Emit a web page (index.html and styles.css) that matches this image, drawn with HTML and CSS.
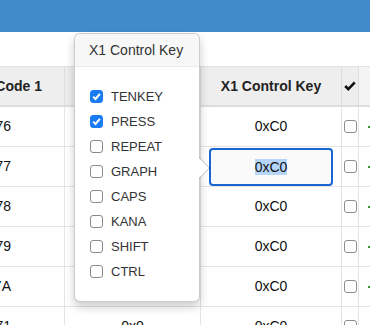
FILE: index.html
```html
<!DOCTYPE html>
<html>
<head>
<meta charset="utf-8">
<link rel="stylesheet" href="styles.css">
</head>
<body>
<div class="topbar"></div>
<div class="toolbar"></div>
<div class="grid-wrap">
  <table class="grid">
    <colgroup><col class="c1"><col class="c2"><col class="c3"><col class="c4"><col class="c5"></colgroup>
    <thead>
      <tr>
        <th class="code">Key Code 1</th>
        <th>Key Code 2</th>
        <th>X1 Control Key</th>
        <th class="chk"><svg class="hcheck" width="12" height="10" viewBox="0 0 12 10"><path d="M1.2 5 L4.3 8.1 L10.8 1.4" fill="none" stroke="#111" stroke-width="2.6"/></svg></th>
        <th class="extra"></th>
      </tr>
    </thead>
    <tbody>
      <tr><td class="code">0x76</td><td>0x0</td><td>0xC0</td><td class="chk"><span class="tbox"></span></td><td class="extra"><span class="mark"></span></td></tr>
      <tr><td class="code">0x77</td><td>0x0</td><td class="edit"><div class="editor"><span class="sel">0xC0</span></div></td><td class="chk"><span class="tbox"></span></td><td class="extra"><span class="mark"></span></td></tr>
      <tr><td class="code">0x78</td><td>0x0</td><td>0xC0</td><td class="chk"><span class="tbox"></span></td><td class="extra"><span class="mark"></span></td></tr>
      <tr><td class="code">0x79</td><td>0x0</td><td>0xC0</td><td class="chk"><span class="tbox"></span></td><td class="extra"><span class="mark"></span></td></tr>
      <tr><td class="code">0x7A</td><td>0x0</td><td>0xC0</td><td class="chk"><span class="tbox"></span></td><td class="extra"><span class="mark"></span></td></tr>
      <tr><td class="code">0x71</td><td>0x0</td><td>0xC0</td><td class="chk"><span class="tbox"></span></td><td class="extra"><span class="mark"></span></td></tr>
    </tbody>
  </table>
</div>

<div class="popover">
  <div class="arrow"></div>
  <h3 class="popover-title">X1 Control Key</h3>
  <div class="popover-content">
    <label class="opt"><span class="box on"><svg width="13" height="13" viewBox="0 0 13 13"><path d="M3.2 6.6 L5.5 9 L9.9 3.9" fill="none" stroke="#fff" stroke-width="2"/></svg></span>TENKEY</label>
    <label class="opt"><span class="box on"><svg width="13" height="13" viewBox="0 0 13 13"><path d="M3.2 6.6 L5.5 9 L9.9 3.9" fill="none" stroke="#fff" stroke-width="2"/></svg></span>PRESS</label>
    <label class="opt"><span class="box"></span>REPEAT</label>
    <label class="opt"><span class="box"></span>GRAPH</label>
    <label class="opt"><span class="box"></span>CAPS</label>
    <label class="opt"><span class="box"></span>KANA</label>
    <label class="opt"><span class="box"></span>SHIFT</label>
    <label class="opt"><span class="box"></span>CTRL</label>
  </div>
</div>
</body>
</html>
```
FILE: styles.css
```css
* { box-sizing: border-box; }
html, body { margin: 0; padding: 0; }
body {
  font-family: "Liberation Sans", Arial, sans-serif;
  font-size: 14px;
  color: #111;
  background: #fff;
  width: 370px;
  height: 325px;
  overflow: hidden;
  position: relative;
}
.topbar { height: 32px; background: #428bca; }
.toolbar { height: 34px; }
.grid-wrap { overflow: hidden; }
.grid {
  border-collapse: separate;
  border-spacing: 0;
  table-layout: fixed;
  width: 454px;
  margin-left: -35px;
}
col.c1 { width: 100px; }
col.c2 { width: 136px; }
col.c3 { width: 141px; }
col.c4 { width: 17px; }
col.c5 { width: 60px; }
.grid th {
  background: #eee;
  font-weight: bold;
  color: #222;
  padding: 0;
  line-height: 38px;
  border-top: 1px solid #e2e2e2;
  border-bottom: 2px solid #ddd;
  border-right: 1px solid #ddd;
  text-align: center;
  white-space: nowrap;
  overflow: hidden;
}
.grid th.extra { background: #f4f4f4; border-right: 0; }
.grid td {
  padding: 0;
  line-height: 39px;
  border-bottom: 1px solid #e4e4e4;
  border-right: 1px solid #e4e4e4;
  text-align: center;
  white-space: nowrap;
  overflow: hidden;
}
.grid th.code { text-align: right; padding-right: 22px; }
.grid td.code { text-align: right; padding-right: 53px; }
.grid td.extra { text-align: left; border-right: 0; }
.hcheck { vertical-align: middle; position: relative; top: -1px; }
.tbox {
  display: inline-block;
  width: 13px;
  height: 13px;
  border: 1px solid #8d8d8d;
  border-radius: 3px;
  background: #fff;
  vertical-align: middle;
  position: relative;
  top: -1px;
}
.mark {
  display: inline-block;
  width: 3px;
  height: 2px;
  background: #2e9a2e;
  margin-left: 9px;
  vertical-align: middle;
}
.grid td.edit { padding: 0 8px; }
.editor {
  height: 38px;
  border: 2px solid #1766d1;
  border-radius: 4px;
  background: #fafafa;
  line-height: 34px;
  text-align: center;
  color: #111;
}
.sel { background: #b5d5fb; }

.popover {
  position: absolute;
  left: 74px;
  top: 33px;
  width: 126px;
  background: #fff;
  border: 1px solid rgba(0,0,0,.2);
  border-radius: 6px;
  box-shadow: 0 5px 10px rgba(0,0,0,.2);
  color: #333;
}
.popover-title {
  margin: 0;
  padding: 7px 14px;
  font-size: 14px;
  font-weight: normal;
  line-height: 18px;
  background: #f7f7f7;
  border-bottom: 1px solid #ebebeb;
  border-radius: 5px 5px 0 0;
}
.popover-content { padding: 17px 15px; }
.opt {
  display: flex;
  align-items: center;
  gap: 8px;
  height: 25px;
  font-size: 13px;
}
.box {
  width: 13px;
  height: 13px;
  flex: none;
  border: 1px solid #8a8a8a;
  border-radius: 3px;
  background: #fff;
  position: relative;
}
.box.on { background: #1a7cf5; border-color: #1a7cf5; }
.box svg { position: absolute; left: -1px; top: -1px; }
.arrow {
  position: absolute;
  top: 50%;
  right: -11px;
  margin-top: -11px;
  width: 0;
  height: 0;
  border: 11px solid transparent;
  border-right-width: 0;
  border-left-color: rgba(0,0,0,.25);
}
.arrow::after {
  content: "";
  position: absolute;
  right: 1px;
  bottom: -10px;
  width: 0;
  height: 0;
  border: 10px solid transparent;
  border-right-width: 0;
  border-left-color: #fff;
}
```
